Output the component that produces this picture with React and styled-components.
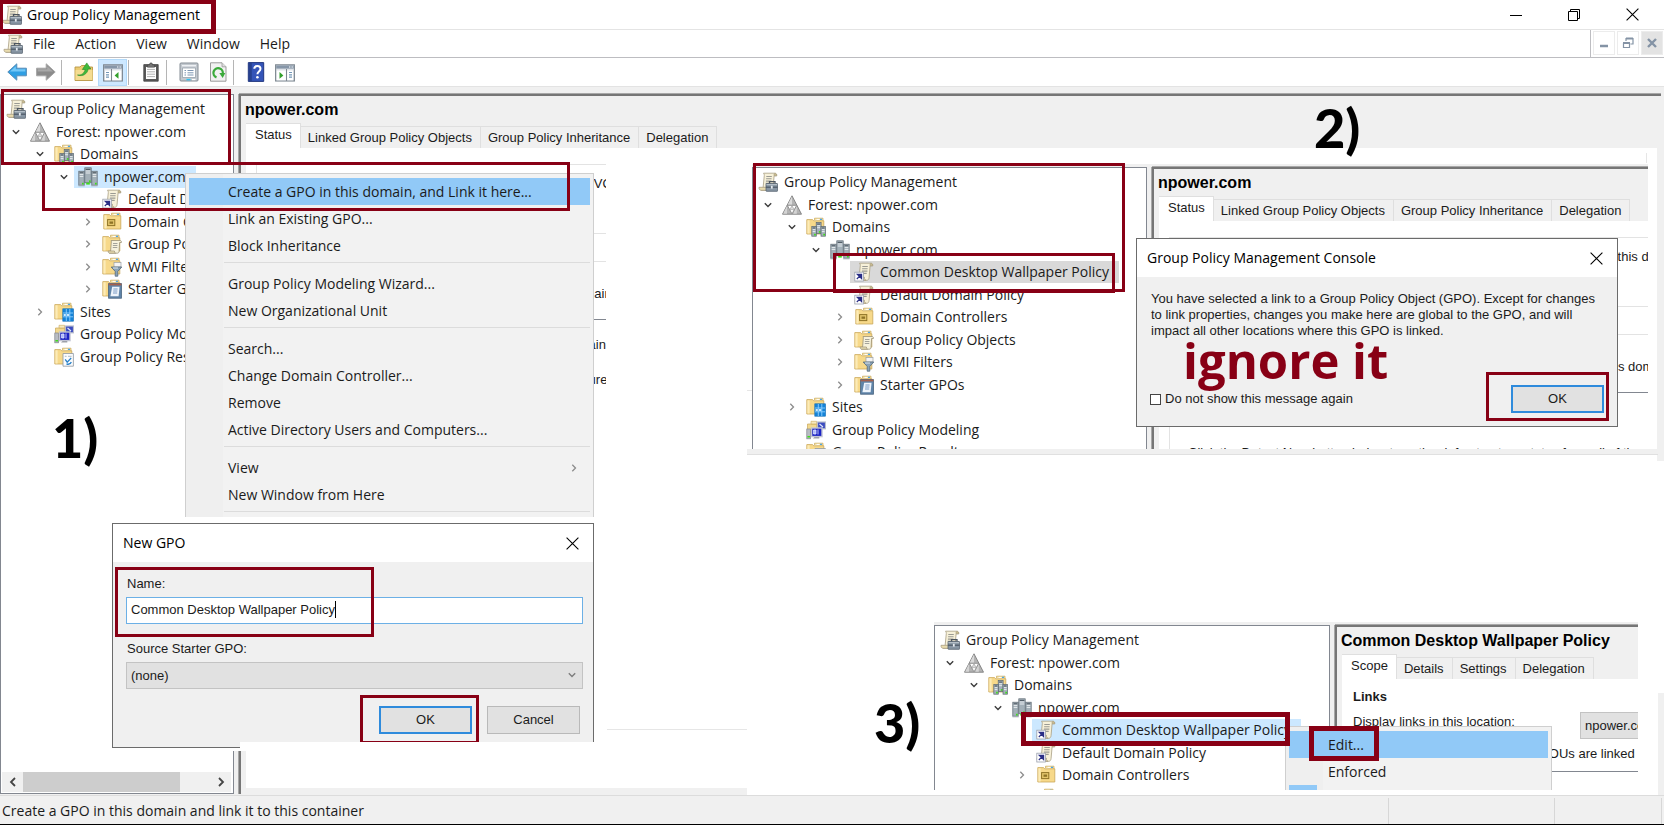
import React from "react";
import styled, { createGlobalStyle, css } from "styled-components";

const UI = `"Open Sans", "Noto Sans", sans-serif`;
const FORM = `"Liberation Sans", Arial, sans-serif`;
const RED = "#880015";

const Global = createGlobalStyle`
  *, *::before, *::after { box-sizing: border-box; }
  html, body { margin: 0; padding: 0; background: #fff; }
  body { font: 14px/20px ${UI}; color: #1b1b1b; overflow: hidden; }
  button, input, select { font: inherit; color: inherit; margin: 0; }
  button { border: 0; background: none; padding: 0; cursor: default; }
  ul { list-style: none; margin: 0; padding: 0; }
  svg { display: block; flex: none; }
`;

/* ---------- icons ---------- */

const Svg = ({ s = 20, children, ...rest }) => (
  <svg width={s} height={s} viewBox="0 0 20 20" aria-hidden="true" {...rest}>{children}</svg>
);

const ScrollShape = () => (
  <>
    <path d="M5.500 1.200h11.200c1.600 0 2.200 1.200 2 2.600h-2.600l-1 11.500c-.1 1.800-1 3-2.300 3H3.400c1.300-.3 1.600-1.500 1.700-2.800L6.300 3.500c0-1-.2-1.900-.8-2.300z" fill="#f7f1d9" stroke="#a89e83" strokeWidth=".8" />
    <path d="M16 3.800c-.2-1.500.1-2.500 1-2.500 1.200 0 1.900 1.200 1.700 2.500z" fill="#c9bb8e" stroke="#a89e83" strokeWidth=".6" />
    <path d="M1 15.300h9.500c-.2 1.600.3 2.600 1.600 3H3c-1.500 0-2.100-1.500-2-3z" fill="#e9dcae" stroke="#a89e83" strokeWidth=".8" />
    <path d="M8.300 4.500h5.500M8.100 6.800h5.500M7.900 9.100h5.500M7.700 11.400h5" stroke="#9a9a93" strokeWidth="1.100" />
  </>
);

const ConsoleIcon = (p) => (
  <Svg {...p}>
    <ScrollShape />
    <path d="M11.500 11.500V9.600h5.500v1.900" fill="none" stroke="#4c555f" strokeWidth="1.300" />
    <rect x="8" y="11.500" width="11.600" height="7.800" rx=".6" fill="#8795a3" stroke="#56626e" strokeWidth=".8" />
    <path d="M8.500 12.600h10.600" stroke="#b9c3cc" strokeWidth="1" />
    <path d="M8 15.200h11.600" stroke="#4b5764" strokeWidth="1.200" />
    <path d="M13.800 13.800v2.800" stroke="#e6ebf0" strokeWidth="1.800" />
  </Svg>
);

const ForestIcon = () => (
  <Svg>
    <path d="M10 .8 19.500 19.200H.5z" fill="#b4b4b4" stroke="#7d7d7d" strokeWidth=".9" />
    <path d="M10 1.600V9.800H5.700z" fill="#dadada" />
    <path d="M5 10.800v7.900H1.200zM14.800 10.800v7.900h-3.600z" fill="#d4d4d4" />
    <path d="M5.300 10.300h9.400L10 18.900z" fill="#fff" stroke="#8a8a8a" strokeWidth=".9" />
    <path d="M7.700 14.600h4.600L10 10.800z" fill="#d9d9d9" stroke="#9a9a9a" strokeWidth=".6" />
  </Svg>
);

const FolderShape = () => (
  <>
    <path d="M8.500 3V1.200h8.500V4" fill="#f6e3a4" stroke="#c9a75a" strokeWidth=".7" />
    <path d="M10.500 2.400h3" stroke="#fff" strokeWidth="1" />
    <path d="M14 2.400h2" stroke="#4aa5e8" strokeWidth="1.100" />
    <path d="M.8 2.600h5.700l1.300 1.200h10V17H.8z" fill="#f7d98a" stroke="#c9a75a" strokeWidth=".8" />
    <path d="M1.400 3.300h2.200v13.200H1.400z" fill="#fcebb8" />
  </>
);

const Tower = ({ x, y, w = 5, h = 10 }) => (
  <>
    <rect x={x} y={y} width={w} height={h} fill="#a3b0b8" stroke="#5b6770" strokeWidth=".7" />
    <path d={`M${x + 0.9} ${y + 1.6}h${w - 1.8}`} stroke="#3f4a52" strokeWidth=".9" />
    <path d={`M${x + 0.9} ${y + 3.2}h${w - 1.8}M${x + 0.9} ${y + 5.2}h${w - 1.8}`} stroke="#eef2f4" strokeWidth=".9" />
    <rect x={x + w - 2.2} y={y + h - 2.4} width="1.700" height="1.700" fill="#3fdc1c" />
  </>
);

const DomainsIcon = () => (
  <Svg>
    <FolderShape />
    <Tower x={10.200} y={5.500} w={4.900} h={11} />
    <Tower x={5.800} y={9.400} w={4.500} h={9.800} />
    <Tower x={15} y={9.400} w={4.500} h={9.800} />
  </Svg>
);

const DomainIcon = () => (
  <Svg>
    <Tower x={6.800} y={.8} w={6.400} h={15} />
    <Tower x={.8} y={4.200} w={5.400} h={14} />
    <Tower x={13.800} y={4.200} w={5.400} h={14} />
    <path d="M8.200 15.600h3.600v2H8.200z" fill="#3fdc1c" />
    <path d="M.4 18.800h6.400M13.200 18.800h6.400" stroke="#a4afb6" strokeWidth="1" />
  </Svg>
);

const LinkIcon = () => (
  <Svg>
    <ScrollShape />
    <rect x=".8" y="10.200" width="8.600" height="8.800" fill="#fff" stroke="#9aa0ad" strokeWidth=".8" />
    <path d="M2.800 17l3.200-3.200M3.300 12.300h4.300v4.300z" fill="#2b2f86" stroke="#2b2f86" strokeWidth="1.200" />
  </Svg>
);

const OuIcon = () => (
  <Svg>
    <g transform="translate(1 0)">
      <FolderShape />
      <rect x="4.600" y="7.600" width="7.200" height="6" fill="#e4c66c" stroke="#8f7326" strokeWidth="1" />
      <path d="M6.500 9.500h3.600v2.300H6.500z" fill="#8f7326" />
    </g>
  </Svg>
);

const GpoFolderIcon = () => (
  <Svg>
    <FolderShape />
    <path d="M9 6.500h9c1.200 0 1.600 1 1.400 2h-1.800l-.5 8.500c0 1.400-.7 2.200-1.700 2.200H7.500c.9-.3 1-1.200 1.100-2.100L9.300 8c0-.7 0-1.200-.3-1.500z" fill="#f7f2dc" stroke="#9b9279" strokeWidth=".8" />
    <path d="M11 9.500h4.500M10.900 11.500h4.500M10.800 13.500h4.500" stroke="#9a9a93" strokeWidth=".9" />
    <path d="M6.200 17h6.200c0 1.200.4 1.900 1.100 2.200H7.600c-1 0-1.500-1-1.400-2.200z" fill="#e9dcae" stroke="#9b9279" strokeWidth=".7" />
  </Svg>
);

const FilterIcon = () => (
  <Svg>
    <FolderShape />
    <rect x="12" y="5.500" width="7" height="4.500" fill="#f4f4f4" stroke="#9aa0a6" strokeWidth=".7" />
    <path d="M9.200 10h10.600l-4 4.400v4.800h-2.600v-4.800z" fill="#8aa3b8" stroke="#56697a" strokeWidth=".8" />
    <path d="M11 11h5" stroke="#dbe6ee" strokeWidth="1" />
  </Svg>
);

const StarterIcon = () => (
  <Svg>
    <FolderShape />
    <rect x="6.600" y="4.600" width="12.800" height="14.600" fill="#5f84a8" stroke="#46627e" strokeWidth=".8" />
    <path d="M6.600 4.600h12.800v1.800H6.600z" fill="#a4604d" />
    <path d="M10.200 7.800h7.400l-1 9.400H8.400z" fill="#eef4fb" />
    <path d="M11.400 10h4.200M11.200 12h4.200M11 14h4.200" stroke="#6b90bd" strokeWidth=".9" />
  </Svg>
);

const SitesIcon = () => (
  <Svg>
    <FolderShape />
    <rect x="8.800" y="6.800" width="10.700" height="12.400" fill="#1583d8" stroke="#0f6cb5" strokeWidth=".6" />
    <path d="M12.300 7v12M15.800 7v12M9 11h10M9 14.800h10" stroke="#8ed0ff" strokeWidth=".9" />
    <path d="M9.600 12h2.200v2H9.600zM13 12h2.200v2H13z" fill="#c8e9ff" />
  </Svg>
);

const ModelingIcon = () => (
  <Svg>
    <path d="M1.500 4h9v9h-9z" fill="#f2d88e" stroke="#c9a75a" strokeWidth=".7" />
    <path d="M5 1.300h5.500V4H5z" fill="#f7e9bd" stroke="#c9a75a" strokeWidth=".6" />
    <rect x="11.500" y="2" width="8" height="6.800" fill="#3c4cc0" stroke="#b9bdcc" strokeWidth="1.200" />
    <path d="M13.500 4l3.500 3" stroke="#dfe7ff" strokeWidth="1.200" />
    <rect x=".8" y="9" width="3.800" height="9.800" fill="#b8bcc3" stroke="#80858d" strokeWidth=".7" />
    <path d="M1.400 16h2.600v1.500H1.400z" fill="#3fdc1c" />
    <rect x="5.600" y="8" width="10.400" height="8.600" fill="#1b22c4" stroke="#c2c5d4" strokeWidth="1.400" />
    <path d="M7.600 10h2.400v4H7.600zM12 9.500v5" fill="#a9b4ff" stroke="#e5eaff" strokeWidth=".8" />
    <path d="M8.500 17h4.800v1.600H7z" fill="#9ca0a8" />
  </Svg>
);

const ResultsIcon = () => (
  <Svg>
    <FolderShape />
    <path d="M9 6.500h10.400v12.700H9z" fill="#fbfcfd" stroke="#8e979f" strokeWidth=".8" />
    <path d="M10.800 9.300h1.800M14 9.300h3.600" stroke="#9ba9b5" strokeWidth=".8" />
    <path d="M11.200 12.400l2 2.800 4-4.200M12.500 17c2.500.6 4.300-.4 4.800-2" fill="none" stroke="#2a82c9" strokeWidth="1.300" />
  </Svg>
);

const Chevron = ({ open }) => (
  <svg width="8" height="8" viewBox="0 0 8 8" aria-hidden="true">
    {open
      ? <path d="M.8 2.300 4 5.500l3.200-3.200" fill="none" stroke="#3c3c3c" strokeWidth="1.400" />
      : <path d="M2.300.8 5.500 4 2.300 7.200" fill="none" stroke="#8c8c8c" strokeWidth="1.300" />}
  </svg>
);

const ArrowIcon = ({ back }) => (
  <Svg>
    <g transform={back ? undefined : "translate(20 0) scale(-1 1)"}>
      <path d="M.8 10 9.800 1.800v4.400h9.600v7.600H9.800v4.400z" fill={back ? "#2f9fe3" : "#8b8b8b"} stroke={back ? "#5b8fb8" : "#a5a5a5"} strokeWidth="1" />
      <path d="M3 9.600 8.800 4.200v3h9.500v2.400z" fill={back ? "#74c8f7" : "#a8a8a8"} />
    </g>
  </Svg>
);

const UpFolderIcon = () => (
  <Svg>
    <path d="M1 5h5l1.500-1.500H12V5h6.500v13.500H1z" fill="#eccb72" stroke="#b89645" strokeWidth=".9" />
    <path d="M1.500 8h17v10h-17z" fill="#f5dc91" />
    <path d="M3.500 13c4 .5 7-2 7.600-5.500H8.300L12.800.9 16.800 7h-2.700C13.500 12 8.500 15 3.500 13z" fill="#3fb93b" stroke="#2a8c2a" strokeWidth=".6" />
  </Svg>
);

const PaneIcon = ({ right }) => (
  <Svg>
    <rect x=".6" y="2.800" width="18.800" height="16.200" fill="#dfe3e8" stroke="#7d8790" strokeWidth="1.100" />
    <path d="M1.200 3.400h17.600v3.200H1.200z" fill="#8696a8" />
    <path d="M14 5h1.400M16.500 5h1.400" stroke="#fff" strokeWidth="1.200" />
    <g transform={right ? "translate(20 0) scale(-1 1)" : undefined}>
      <path d="M2 8.500h5.800v9.800H2zM9.200 8.500h9v9.800h-9z" fill="#fff" />
      <path d="M3 10.500h3M3 12.800h3M3 15.200h3" stroke="#7396b6" strokeWidth="1.200" />
      <path d="M8.500 7v12" stroke="#7d8790" strokeWidth="1" />
      <path d="M15.500 10v6.800L11.600 13.400z" fill="#33a02c" />
    </g>
  </Svg>
);

const ClipboardIcon = () => (
  <Svg>
    <path d="M2.800 2.600h14.400v16.600H2.800z" fill="#595959" stroke="#404040" strokeWidth=".8" />
    <path d="M5 5h10v12H5z" fill="#fff" />
    <path d="M6 7.400h8M6 9.800h8M6 12.200h8M6 14.600h8" stroke="#b4b4b4" strokeWidth="1" />
    <path d="M6.500 3h2l.5-2h2l.5 2h2v2.200h-7z" fill="#777" stroke="#444" strokeWidth=".6" />
  </Svg>
);

const PropertiesIcon = () => (
  <Svg>
    <rect x="1" y="1" width="18" height="18" rx="1" fill="#c3c9cf" stroke="#858d95" strokeWidth="1" />
    <path d="M3 3h14v1.400H3z" fill="#eef1f4" />
    <path d="M3.500 6h13v9.500h-13z" fill="#fff" stroke="#98a2ac" strokeWidth=".8" />
    <path d="M5.500 8.500h1.500M8.500 8.500h6M5.500 10.800h1.500M8.500 10.800h6M5.500 13h1.500M8.500 13h6" stroke="#7d96b3" strokeWidth="1" />
    <path d="M7.500 17.600h4" stroke="#2fc3f2" strokeWidth="1.500" />
    <path d="M13 17.600h3.500" stroke="#fff" strokeWidth="1.200" />
  </Svg>
);

const RefreshIcon = () => (
  <Svg>
    <path d="M2.500.8H14l4 4v14.400H2.500z" fill="#f1f1f1" stroke="#9b9b9b" strokeWidth="1" />
    <path d="M14 .8v4h4" fill="#ddd" stroke="#9b9b9b" strokeWidth=".8" />
    <path d="M8.500 15.300A4.700 4.700 0 1 1 14.700 12" fill="none" stroke="#3aaa3a" strokeWidth="2.300" />
    <path d="M11.300 11h6l-2.600 5z" fill="#3aaa3a" />
  </Svg>
);

const HelpIcon = () => (
  <Svg>
    <path d="M2.300.6h15.400v18.800H2.300z" fill="#3454b8" stroke="#22377f" strokeWidth="1" />
    <path d="M3 1h2.800v18H3z" fill="#26408f" />
    <path d="M8.300 6.800c.1-3.800 6.200-3.700 6.200 0 0 2.600-3.100 2.700-3.100 5.400" fill="none" stroke="#fff" strokeWidth="2" />
    <circle cx="11.400" cy="15.300" r="1.300" fill="#fff" />
  </Svg>
);

const CloseIcon = () => (
  <svg width="13" height="13" viewBox="0 0 13 13" aria-hidden="true"><path d="M.6.6l11.800 11.800M12.400.6.6 12.400" stroke="#000" strokeWidth="1.100" /></svg>
);

/* ---------- main window ---------- */

const Screen = styled.main`
  position: relative;
  display: flex;
  flex-direction: column;
  min-height: 100vh;
  background: #f0f0f0;
  border-bottom: 1px solid #000;
  overflow: hidden;
`;

const TitleBar = styled.header`
  display: flex;
  align-items: center;
  height: 30px;
  padding: 0 3px 0 2px;
  background: #fff;
  border-bottom: 1px solid #e4e4e4;
`;

const WindowTitle = styled.h1`
  flex: 1;
  margin: 0 0 0 5px;
  font-size: 14px;
  font-weight: 400;
  color: #000;
`;

const CaptionButton = styled.button`
  display: grid;
  place-items: center;
  width: 58px;
  height: 28px;
`;

const MenuBar = styled.nav`
  display: flex;
  align-items: center;
  height: 28px;
  padding: 0 1px 0 3px;
  background: #fff;
  border-bottom: 1px solid #bdbdc1;
`;

const MenuButton = styled.button`
  padding: 0 10px;
`;

const MdiControls = styled.div`
  display: flex;
  gap: 2px;
  align-self: stretch;
  margin-left: auto;
  padding: 1px 0 2px 2px;
  border-left: 1px solid #bdbdc1;
`;

const MdiButton = styled.button`
  display: grid;
  place-items: center;
  width: 22px;
  background: ${(p) => (p.$dim ? "#e3e3e3" : "#fff")};
  border: 1px solid #ececec;
`;

const ToolBar = styled.div`
  display: flex;
  align-items: center;
  height: 29px;
  padding-left: 2px;
  background: #fff;
  border-bottom: 1px solid #e3e3e3;
`;

const ToolButton = styled.button`
  display: grid;
  place-items: center;
  width: 29px;
  height: 27px;
  ${(p) => p.$on && css`background: #cde8ff; border: 1px solid #b3dafa;`}
`;

const ToolDivider = styled.span`
  width: 9px;
  height: 25px;
  padding-left: 1px;
  &::before { content: ""; display: block; width: 1px; height: 100%; background: #b5b5b5; }
`;

const Split = styled.div`
  display: flex;
  flex: 1;
  min-width: 0;
  ${(p) => p.$main && css`padding: 7px 3px 1px 0;`}
`;

const TreePane = styled.section`
  display: flex;
  flex-direction: column;
  flex: none;
  width: ${(p) => p.$width}px;
  margin-right: 5px;
  background: #fff;
  border: 1px solid #828790;
  border-bottom-width: ${(p) => (p.$cropped ? 0 : 1)}px;
  overflow: hidden;
`;

const TreeList = styled.ul`
  flex: 1;
  padding: 3px 0 0 5px;
`;

const TreeRow = styled.li`
  display: flex;
  align-items: center;
  height: 22px;
  padding-left: ${(p) => p.$level * 24 - (p.$level ? 24 : 0)}px;
  white-space: nowrap;
  &:nth-child(even) { height: 23px; }
`;

const Twisty = styled.span`
  display: grid;
  place-items: center;
  flex: none;
  width: 20px;
  margin-right: 4px;
`;

const NodeLabel = styled.span`
  display: flex;
  align-items: center;
  flex: none;
  gap: 6px;
  height: 22px;
  margin-left: ${(p) => (p.$root ? 0 : -4)}px;
  padding: 0 10px 0 ${(p) => (p.$root ? 0 : 4)}px;
  background: ${(p) => p.$fill || "transparent"};
`;

const ScrollBar = styled.div`
  display: flex;
  align-items: center;
  height: 20px;
  margin: 0 2px 1px 1px;
  background: #f0f0f0;
`;

const ScrollArrow = styled.button`
  display: grid;
  place-items: center;
  width: 21px;
  height: 20px;
`;

const ScrollTrack = styled.div`
  flex: 1;
  height: 20px;
`;

const ScrollThumb = styled.div`
  width: 84%;
  height: 100%;
  background: #cdcdcd;
`;

const ResultPane = styled.section`
  display: flex;
  flex-direction: column;
  flex: 1;
  min-width: 0;
  background: #f0f0f0;
  border-top: 2px solid #767676;
  border-left: 2px solid #767676;
  box-shadow: 0 -1px 0 #a8a8a8, -1px 0 0 #a8a8a8;
  font-family: ${FORM};
  font-size: 13px;
  line-height: 16px;
  overflow: hidden;
`;

const PaneTitle = styled.h2`
  margin: 0;
  padding-left: 4px;
  font-size: 16px;
  line-height: 27px;
  color: #000;
  white-space: nowrap;
`;

const Tabs = styled.div`
  display: flex;
  align-items: flex-end;
  height: 25px;
  padding-left: 5px;
`;

const Tab = styled.button`
  flex: none;
  height: 22px;
  padding: 0 8px 0 7px;
  background: #f0f0f0;
  border: 1px solid #dfdfdf;
  border-width: 1px 1px 0 0;
  white-space: nowrap;
  ${(p) => p.$active && css`
    height: 25px;
    padding: 0 8px 2px 9px;
    background: #fff;
  `}
`;

const TabBody = styled.div`
  flex: 1;
  margin: 0 ${(p) => (p.$main ? 4 : 0)}px ${(p) => (p.$main ? 6 : 0)}px 5px;
  background: #fff;
  overflow: hidden;
  white-space: nowrap;
`;

const StatusContent = styled.div`
  max-width: ${(p) => (p.$narrow ? "360px" : "none")};
  padding: 16px 0 0 10px;
  overflow: hidden;
`;

const StatusGroup = styled.div`
  height: ${(p) => (p.$tall ? 400 : 70)}px;
  margin-bottom: 27px;
  padding: ${(p) => (p.$tall ? 24 : 11)}px 0 0 16px;
  border: 1px solid #e3e3e3;
  border-right: 0;
  border-bottom-width: ${(p) => (p.$tall ? 0 : 1)}px;
`;

const StatusText = styled.p`
  margin: 0 0 ${(p) => p.$after || 0}px;
  padding-left: ${(p) => p.$indent || 0}px;
`;

const StatusList = styled.div`
  padding-top: 17px;
  border-top: 1px solid #828790;
`;

const StatusBar = styled.footer`
  display: flex;
  align-items: center;
  height: 29px;
  padding: 2px 0 0 2px;
  border-top: 1px solid #dcdcdc;
`;

const StatusMessage = styled.span`
  flex: 1;
`;

const StatusCell = styled.span`
  width: ${(p) => p.$width}px;
  height: 26px;
  border-left: 1px solid #d7d7d7;
`;

/* ---------- floating layers ---------- */

const Layer = styled.div`
  position: absolute;
  left: ${(p) => p.$x}px;
  top: ${(p) => p.$y}px;
  width: ${(p) => p.$w}px;
  height: ${(p) => p.$h}px;
`;

const Blank = styled(Layer)`
  background: #fff;
`;

const Rule = styled(Layer)`
  background: #e6e6e6;
`;

const Marker = styled(Layer)`
  border: ${(p) => p.$t || 3}px solid ${RED};
  pointer-events: none;
`;

const Snip = styled(Layer)`
  display: flex;
  padding-top: 3px;
  background: #f0f0f0;
  overflow: hidden;
`;

const SnipEdge = styled(Layer)`
  background: #f0f0f0;
  border: 1px solid #e0e0e0;
  border-width: 0 0 1px;
`;

const Note = styled.p`
  position: absolute;
  left: ${(p) => p.$x}px;
  top: ${(p) => p.$y}px;
  margin: 0;
  font: 900 54px/60px Lato, sans-serif;
  color: #000;
  white-space: nowrap;
`;

const RedNote = styled(Note)`
  font: 700 49px/60px ${UI};
  color: ${RED};
`;

const PopupMenu = styled(Layer)`
  display: flex;
  flex-direction: column;
  padding: 4px 3px 0;
  background: linear-gradient(90deg, #efefef 37px, #f2f2f2 37px);
  border: 1px solid #cfcfcf;
  border-bottom: 0;
  overflow: hidden;
`;

const PopupItem = styled.button`
  display: flex;
  align-items: center;
  justify-content: space-between;
  flex: none;
  height: 27px;
  padding: 0 12px 0 39px;
  text-align: left;
  background: ${(p) => (p.$hot ? "#91c9f7" : "transparent")};
`;

const PopupRule = styled.hr`
  flex: none;
  width: calc(100% - 35px);
  height: 1px;
  margin: 3px 0 7px 35px;
  border: 0;
  background: #dcdcdc;
`;

const CheckSlot = styled.span`
  flex: none;
  width: 28px;
  height: 27px;
  background: #91c9f7;
`;

const Dialog = styled(Layer)`
  display: flex;
  flex-direction: column;
  background: #f0f0f0;
  border: 1px solid #6b6b6b;
`;

const DialogTitle = styled.header`
  display: flex;
  align-items: center;
  justify-content: space-between;
  height: 38px;
  padding: 0 14px 0 10px;
  background: #fff;
  color: #000;
`;

const DialogForm = styled.form`
  display: flex;
  flex-direction: column;
  flex: 1;
  padding: 14px 10px 13px 13px;
  font-family: ${FORM};
  font-size: 13px;
  line-height: 16px;
`;

const FieldLabel = styled.label`
  margin-bottom: 5px;
  padding-left: 1px;
`;

const Field = styled.div`
  position: relative;
  height: 27px;
  margin-bottom: 17px;
`;

const TextInput = styled.input`
  width: 100%;
  height: 100%;
  padding: 0 4px 2px;
  background: #fff;
  border: 1px solid #6cb0e6;
  outline: 0;
`;

const Caret = styled.span`
  position: absolute;
  left: 209px;
  top: 4px;
  width: 1px;
  height: 17px;
  background: #000;
`;

const Dropdown = styled.select`
  appearance: none;
  width: 100%;
  height: 100%;
  padding: 0 4px;
  background: #e1e1e1;
  border: 1px solid #c3c3c3;
  border-radius: 0;
`;

const DropdownArrow = styled.span`
  position: absolute;
  right: 7px;
  top: 9px;
  opacity: .6;
`;

const Actions = styled.div`
  display: flex;
  align-items: center;
  justify-content: ${(p) => (p.$spread ? "space-between" : "flex-end")};
  gap: 15px;
  margin-top: auto;
  padding-right: 3px;
`;

const PushButton = styled.button`
  width: 93px;
  height: 28px;
  background: #e1e1e1;
  border: 1px solid #b9b9b9;
  ${(p) => p.$primary && css`border: 2px solid #2f8bdc;`}
`;

const Message = styled.p`
  margin: 0;
  padding-left: 1px;
  white-space: nowrap;
`;

const CheckLabel = styled.label`
  display: flex;
  align-items: center;
  gap: 4px;
`;

const CheckBox = styled.input`
  appearance: none;
  width: 11px;
  height: 11px;
  background: #fff;
  border: 1px solid #444;
`;

const ScopeBody = styled.div`
  padding: 10px 0 0 11px;
`;

const ScopeHeading = styled.h3`
  margin: 0 0 7px;
  font-size: 13px;
`;

const ScopeRow = styled.div`
  display: flex;
  margin-bottom: 7px;
`;

const ScopeLabel = styled.label`
  flex: none;
  width: 227px;
  line-height: 20px;
`;

const ScopeSelect = styled(Dropdown)`
  flex: none;
  width: 200px;
  height: 27px;
`;

const ScopeList = styled.div`
  width: 400px;
  height: 60px;
  margin-top: 9px;
  border: 1px solid #828790;
`;

/* ---------- parts ---------- */

const Tree = ({ rows }) => (
  <TreeList>
    {rows.map(([level, open, Icon, text, fill], i) => (
      <TreeRow key={i} $level={level}>
        {level > 0 && <Twisty>{open !== null && <Chevron open={open} />}</Twisty>}
        <NodeLabel $root={level === 0} $fill={fill}><Icon />{text}</NodeLabel>
      </TreeRow>
    ))}
  </TreeList>
);

const makeRows = ({ extra, domainFill } = {}) => [
  [0, null, ConsoleIcon, "Group Policy Management"],
  [1, true, ForestIcon, "Forest: npower.com"],
  [2, true, DomainsIcon, "Domains"],
  [3, true, DomainIcon, "npower.com", domainFill],
  ...(extra ? [[4, null, LinkIcon, "Common Desktop Wallpaper Policy", extra]] : []),
  [4, null, LinkIcon, "Default Domain Policy"],
  [4, false, OuIcon, "Domain Controllers"],
  [4, false, GpoFolderIcon, "Group Policy Objects"],
  [4, false, FilterIcon, "WMI Filters"],
  [4, false, StarterIcon, "Starter GPOs"],
  [2, false, SitesIcon, "Sites"],
  [2, null, ModelingIcon, "Group Policy Modeling"],
  [2, null, ResultsIcon, "Group Policy Results"],
];

const TabStrip = ({ names }) => (
  <Tabs role="tablist">
    {names.map((n, i) => <Tab key={n} role="tab" aria-selected={i === 0} $active={i === 0}>{n}</Tab>)}
  </Tabs>
);

const DOMAIN_TABS = ["Status", "Linked Group Policy Objects", "Group Policy Inheritance", "Delegation"];

const DomainStatus = ({ main }) => (
  <ResultPane>
    <PaneTitle>npower.com</PaneTitle>
    <TabStrip names={DOMAIN_TABS} />
    <TabBody $main={main}>
      <StatusContent $narrow={main}>
        <StatusGroup>
          <StatusText>This page shows the status of Active Directory and SYSVOL replication for this domain as it relates to Group Policy.</StatusText>
        </StatusGroup>
        <StatusGroup $tall>
          <StatusText $after={17} $indent={106}>DC1.npower.com is the baseline domain controller for this domain.</StatusText>
          <StatusList>
            <StatusText $after={19} $indent={2}>No Infrastructure Status information exists for this domain.</StatusText>
            <StatusText $indent={2}>Click the Detect Now button below to gather infrastructure status from all of the domain controllers.</StatusText>
          </StatusList>
        </StatusGroup>
      </StatusContent>
    </TabBody>
  </ResultPane>
);

const MENU = [
  "Create a GPO in this domain, and Link it here...", "Link an Existing GPO...", "Block Inheritance", null,
  "Group Policy Modeling Wizard...", "New Organizational Unit", null,
  "Search...", "Change Domain Controller...", "Remove", "Active Directory Users and Computers...", null,
  "View", "New Window from Here", null,
];

export default function App() {
  return (
    <Screen>
      <Global />
      <TitleBar>
        <ConsoleIcon />
        <WindowTitle>Group Policy Management</WindowTitle>
        <CaptionButton aria-label="Minimize"><svg width="12" height="12"><path d="M0 6.500h12" stroke="#000" /></svg></CaptionButton>
        <CaptionButton aria-label="Restore"><svg width="12" height="12"><path d="M.5 2.500h9v9h-9zM2.500 2.500v-2h9v9h-2" fill="none" stroke="#000" /></svg></CaptionButton>
        <CaptionButton aria-label="Close"><CloseIcon /></CaptionButton>
      </TitleBar>

      <MenuBar>
        <ConsoleIcon />
        {["File", "Action", "View", "Window", "Help"].map((m) => <MenuButton key={m}>{m}</MenuButton>)}
        <MdiControls>
          <MdiButton aria-label="Minimize console"><svg width="10" height="10"><path d="M1 8h8" stroke="#8493a5" strokeWidth="2.500" /></svg></MdiButton>
          <MdiButton aria-label="Restore console"><svg width="12" height="12"><path d="M1.500 6.500h6v4h-6zM4 4V1.500h7V7H8.500" fill="none" stroke="#8493a5" strokeWidth="1.200" /><path d="M1 6h7M4 1.500h7" stroke="#8493a5" strokeWidth="2" /></svg></MdiButton>
          <MdiButton $dim aria-label="Close console"><svg width="10" height="10"><path d="M1 1l8 8M9 1 1 9" stroke="#8493a5" strokeWidth="2.400" /></svg></MdiButton>
        </MdiControls>
      </MenuBar>

      <ToolBar>
        <ToolButton aria-label="Back"><ArrowIcon back /></ToolButton>
        <ToolButton aria-label="Forward"><ArrowIcon /></ToolButton>
        <ToolDivider />
        <ToolButton aria-label="Up one level"><UpFolderIcon /></ToolButton>
        <ToolButton $on aria-label="Show console tree"><PaneIcon /></ToolButton>
        <ToolDivider />
        <ToolButton aria-label="Paste"><ClipboardIcon /></ToolButton>
        <ToolDivider />
        <ToolButton aria-label="Properties"><PropertiesIcon /></ToolButton>
        <ToolButton aria-label="Refresh"><RefreshIcon /></ToolButton>
        <ToolDivider />
        <ToolButton aria-label="Help contents"><HelpIcon /></ToolButton>
        <ToolButton aria-label="Show action pane"><PaneIcon right /></ToolButton>
      </ToolBar>

      <Split $main>
        <TreePane $width={234}>
          <Tree rows={makeRows({ domainFill: "#cce8ff" })} />
          <ScrollBar>
            <ScrollArrow aria-label="Scroll left"><svg width="8" height="10"><path d="M6 1 2 5l4 4" fill="none" stroke="#444" strokeWidth="1.800" /></svg></ScrollArrow>
            <ScrollTrack><ScrollThumb /></ScrollTrack>
            <ScrollArrow aria-label="Scroll right"><svg width="8" height="10"><path d="M2 1l4 4-4 4" fill="none" stroke="#444" strokeWidth="1.800" /></svg></ScrollArrow>
          </ScrollBar>
        </TreePane>
        <DomainStatus main />
      </Split>

      <StatusBar>
        <StatusMessage>Create a GPO in this domain and link it to this container</StatusMessage>
        <StatusCell $width={166} />
        <StatusCell $width={107} />
        <StatusCell $width={3} />
      </StatusBar>

      <Blank $x={228} $y={517} $w={60} $h={234} />
      <Blank $x={747} $y={693} $w={911} $h={102} />
      <Blank $x={1640} $y={461} $w={24} $h={232} />
      <Rule $x={607} $y={729} $w={140} $h={1} />
      <Rule $x={747} $y={390} $w={5} $h={1} />
      <Rule $x={1646} $y={153} $w={1} $h={10} />

      <PopupMenu $x={185} $y={173} $w={409} $h={344} role="menu">
        {MENU.map((m, i) => m === null
          ? <PopupRule key={i} />
          : <PopupItem key={i} role="menuitem" $hot={i === 0}>{m}{m === "View" && <Chevron />}</PopupItem>)}
      </PopupMenu>

      <Dialog $x={112} $y={523} $w={482} $h={225} role="dialog" aria-label="New GPO">
        <DialogTitle>New GPO<button aria-label="Close dialog"><CloseIcon /></button></DialogTitle>
        <DialogForm onSubmit={(e) => e.preventDefault()}>
          <FieldLabel htmlFor="gpo-name">Name:</FieldLabel>
          <Field><TextInput id="gpo-name" defaultValue="Common Desktop Wallpaper Policy" /><Caret /></Field>
          <FieldLabel htmlFor="gpo-source">Source Starter GPO:</FieldLabel>
          <Field>
            <Dropdown id="gpo-source" defaultValue="none"><option value="none">(none)</option></Dropdown>
            <DropdownArrow><Chevron open /></DropdownArrow>
          </Field>
          <Actions>
            <PushButton $primary>OK</PushButton>
            <PushButton type="button">Cancel</PushButton>
          </Actions>
        </DialogForm>
      </Dialog>
      <Marker $x={115} $y={567} $w={259} $h={70} />
      <Marker $x={360} $y={695} $w={119} $h={49} />
      <Blank $x={240} $y={742} $w={360} $h={9} />

      <Snip $x={752} $y={164} $w={896} $h={285}>
        <TreePane $cropped $width={395}><Tree rows={makeRows({ extra: "#d9d9d9" })} /></TreePane>
        <DomainStatus />
      </Snip>
      <SnipEdge $x={747} $y={449} $w={911} $h={6} />
      <Dialog $x={1136} $y={238} $w={482} $h={189} role="dialog" aria-label="Group Policy Management Console">
        <DialogTitle>Group Policy Management Console<button aria-label="Close message"><CloseIcon /></button></DialogTitle>
        <DialogForm onSubmit={(e) => e.preventDefault()}>
          <Message>
            You have selected a link to a Group Policy Object (GPO). Except for changes<br />
            to link properties, changes you make here are global to the GPO, and will<br />
            impact all other locations where this GPO is linked.
          </Message>
          <Actions $spread>
            <CheckLabel><CheckBox type="checkbox" />Do not show this message again</CheckLabel>
            <PushButton $primary>OK</PushButton>
          </Actions>
        </DialogForm>
      </Dialog>

      <Snip $x={934} $y={622} $w={704} $h={168}>
        <TreePane $cropped $width={396}><Tree rows={makeRows({ extra: "#cce8ff" })} /></TreePane>
        <ResultPane>
          <PaneTitle>Common Desktop Wallpaper Policy</PaneTitle>
          <TabStrip names={["Scope", "Details", "Settings", "Delegation"]} />
          <TabBody>
            <ScopeBody>
              <ScopeHeading>Links</ScopeHeading>
              <ScopeRow>
                <ScopeLabel htmlFor="scope-location">Display links in this location:</ScopeLabel>
                <ScopeSelect id="scope-location" defaultValue="npower.com"><option>npower.com</option></ScopeSelect>
              </ScopeRow>
              <StatusText>The following sites, domains, and OUs are linked to this GPO:</StatusText>
              <ScopeList />
            </ScopeBody>
          </TabBody>
        </ResultPane>
      </Snip>
      <PopupMenu $x={1285} $y={726} $w={267} $h={64} role="menu">
        <PopupItem role="menuitem" $hot>Edit...</PopupItem>
        <PopupItem role="menuitem">Enforced</PopupItem>
        <CheckSlot />
      </PopupMenu>

      <Marker $x={-2} $y={-1} $w={218} $h={35} $t={5} />
      <Marker $x={1} $y={89} $w={230} $h={76} />
      <Marker $x={42} $y={162} $w={528} $h={49} />
      <Marker $x={753} $y={163} $w={372} $h={129} />
      <Marker $x={833} $y={253} $w={282} $h={40} />
      <Marker $x={1486} $y={372} $w={123} $h={49} />
      <Marker $x={1021} $y={712} $w={269} $h={34} $t={5} />
      <Marker $x={1309} $y={726} $w={70} $h={35} $t={5} />

      <Note $x={52} $y={408}>1)</Note>
      <Note $x={1314} $y={98}>2)</Note>
      <Note $x={874} $y={693}>3)</Note>
      <RedNote $x={1183} $y={330}>ignore it</RedNote>
    </Screen>
  );
}
